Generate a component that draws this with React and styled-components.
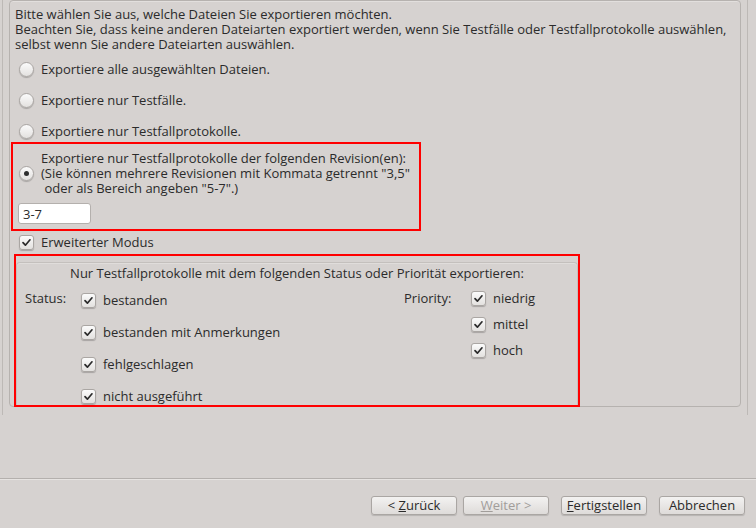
import React from 'react';
import styled, { createGlobalStyle } from 'styled-components';

const GlobalStyle = createGlobalStyle`
  html, body {
    margin: 0;
    padding: 0;
    background: #d6d2d0;
  }
  body {
    font-family: "Open Sans", "DejaVu Sans", sans-serif;
    font-size: 13px;
    color: #2b2b2b;
  }
`;

const Page = styled.div`
  width: 756px;
  height: 528px;
  display: flex;
  flex-direction: column;
  background: #d6d2d0;
`;

const ScrollFrame = styled.div`
  box-sizing: border-box;
  margin-left: 2px;
  width: 746px;
  height: 415px;
  padding: 0 6px;
  border-left: 1px solid #bdb9b6;
  border-right: 1px solid #bdb9b6;
`;

const Panel = styled.div`
  box-sizing: border-box;
  height: 407px;
  border: 1px solid #b6b2af;
  border-radius: 4px;
  box-shadow: inset 0 1px 0 #e2dfdd;
`;

const Intro = styled.div`
  margin: 6px 0 0 5px;
  line-height: 15px;
  white-space: nowrap;
`;

const Options = styled.div`
  display: flex;
  flex-direction: column;
  gap: 16px;
  margin-top: 10px;
`;

const OptionRow = styled.label`
  display: flex;
  align-items: center;
  padding-left: ${p => p.$indent ?? 9}px;
  line-height: 15px;
`;

const Radio = styled.span`
  box-sizing: border-box;
  flex: none;
  width: 15px;
  height: 15px;
  border-radius: 50%;
  border: 1px solid #aaa6a3;
  background: linear-gradient(#fbfbfb, #e3e1df);
  box-shadow: 0 1px 1px rgba(0, 0, 0, 0.22);
  display: flex;
  align-items: center;
  justify-content: center;

  &::after {
    content: '';
    display: ${p => (p.$checked ? 'block' : 'none')};
    width: 5px;
    height: 5px;
    border-radius: 50%;
    background: #2e2e2e;
  }
`;

const BoxWrap = styled.span`
  box-sizing: border-box;
  flex: none;
  width: 15px;
  height: 15px;
  border-radius: 3px;
  border: 1px solid #aaa6a3;
  background: linear-gradient(#fbfbfb, #e3e1df);
  box-shadow: 0 1px 1px rgba(0, 0, 0, 0.22);
  display: flex;
  align-items: center;
  justify-content: center;
`;

const Check = () => (
  <BoxWrap>
    <svg width="11" height="11" viewBox="0 0 11 11">
      <path d="M2 5.6 L4.4 8.2 L9 2.8" fill="none" stroke="#2a2a2a" strokeWidth="1.7" strokeLinecap="round" strokeLinejoin="round" />
    </svg>
  </BoxWrap>
);

const LabelText = styled.span`
  margin-left: 7px;
  white-space: pre;
`;

const Highlight = styled.div`
  box-sizing: border-box;
  border: 2px solid #ff0000;
  width: ${p => p.$width}px;
  height: ${p => (p.$height ? `${p.$height}px` : 'auto')};
  margin: ${p => p.$margin};
  padding: ${p => p.$padding ?? 0};
  display: flex;
  flex-direction: column;
`;

const RevisionInput = styled.input`
  box-sizing: border-box;
  width: 73px;
  height: 21px;
  margin: 7px 0 0 5px;
  padding: 0 4px;
  border: 1px solid #b4b0ad;
  border-radius: 3px;
  background: #fff;
  font: inherit;
  color: #2b2b2b;
  outline: none;
`;

const GroupBox = styled.div`
  flex: 1;
  margin-top: 6px;
  border: 1px solid #c4c0bd;
  border-bottom: none;
  border-radius: 4px 4px 0 0;
  box-shadow: inset 0 1px 0 #e0dddb;
  padding-top: 3px;
`;

const GroupTitle = styled.div`
  text-align: center;
  line-height: 15px;
`;

const FilterRow = styled.div`
  display: flex;
  margin-top: 10px;
  padding-left: 8px;
`;

const Filter = styled.div`
  display: flex;
  width: ${p => (p.$width ? `${p.$width}px` : 'auto')};
`;

const FilterLabel = styled.div`
  width: ${p => p.$width}px;
  line-height: 15px;
  flex: none;
`;

const FilterList = styled.div`
  display: flex;
  flex-direction: column;
  justify-content: ${p => (p.$spread ? 'space-between' : 'flex-start')};
  gap: ${p => p.$gap ?? 0}px;
  height: ${p => (p.$height ? `${p.$height}px` : 'auto')};
  padding-top: ${p => p.$top}px;
`;

const CheckRow = styled.div`
  display: flex;
  align-items: center;
  line-height: 15px;
`;

const Footer = styled.div`
  margin-top: auto;
  height: 50px;
  box-sizing: border-box;
  border-top: 1px solid #b4b0ad;
  box-shadow: inset 0 1px 0 #e6e3e1;
  display: flex;
  justify-content: flex-end;
  align-items: flex-start;
  padding: 17px 11px 0 0;
  gap: 12px;
`;

const ButtonGroup = styled.div`
  display: flex;
  gap: ${p => p.$gap}px;
`;

const Button = styled.button`
  box-sizing: border-box;
  width: 86px;
  height: 19px;
  padding: 0;
  border: 1px solid #aaa6a3;
  border-radius: 3px;
  background: linear-gradient(#f3f2f1, #dedbd9);
  box-shadow: 0 1px 1px rgba(0, 0, 0, 0.15);
  font-family: inherit;
  font-size: 13px;
  line-height: 17px;
  white-space: nowrap;
  color: ${p => (p.disabled ? '#a19d9a' : '#2b2b2b')};
`;

const statuses = ['bestanden', 'bestanden mit Anmerkungen', 'fehlgeschlagen', 'nicht ausgeführt'];
const priorities = ['niedrig', 'mittel', 'hoch'];

export default function App() {
  return (
    <Page>
      <GlobalStyle />
      <ScrollFrame>
        <Panel>
          <Intro>
            Bitte wählen Sie aus, welche Dateien Sie exportieren möchten.<br />
            Beachten Sie, dass keine anderen Dateiarten exportiert werden, wenn Sie Testfälle oder Testfallprotokolle auswählen,<br />
            selbst wenn Sie andere Dateiarten auswählen.
          </Intro>

          <Options>
            <OptionRow><Radio /><LabelText>Exportiere alle ausgewählten Dateien.</LabelText></OptionRow>
            <OptionRow><Radio /><LabelText>Exportiere nur Testfälle.</LabelText></OptionRow>
            <OptionRow><Radio /><LabelText>Exportiere nur Testfallprotokolle.</LabelText></OptionRow>
          </Options>

          <Highlight $width={410} $margin="3px 0 0 1px" $padding="7px 0 5px 0">
            <OptionRow $indent={6}>
              <Radio $checked />
              <LabelText>
                {'Exportiere nur Testfallprotokolle der folgenden Revision(en):\n(Sie können mehrere Revisionen mit Kommata getrennt "3,5"\n oder als Bereich angeben "5-7".)'}
              </LabelText>
            </OptionRow>
            <RevisionInput defaultValue="3-7" />
          </Highlight>

          <OptionRow style={{ marginTop: 4 }}>
            <Check /><LabelText>Erweiterter Modus</LabelText>
          </OptionRow>

          <Highlight $width={566} $height={153} $margin="4px 0 0 4px">
            <GroupBox>
              <GroupTitle>Nur Testfallprotokolle mit dem folgenden Status oder Priorität exportieren:</GroupTitle>
              <FilterRow>
                <Filter $width={379}>
                  <FilterLabel $width={56}>Status:</FilterLabel>
                  <FilterList $spread $height={111} $top={2}>
                    {statuses.map(s => (
                      <CheckRow key={s}><Check /><LabelText>{s}</LabelText></CheckRow>
                    ))}
                  </FilterList>
                </Filter>
                <Filter>
                  <FilterLabel $width={67}>Priority:</FilterLabel>
                  <FilterList $gap={11} $top={0}>
                    {priorities.map(s => (
                      <CheckRow key={s}><Check /><LabelText>{s}</LabelText></CheckRow>
                    ))}
                  </FilterList>
                </Filter>
              </FilterRow>
            </GroupBox>
          </Highlight>
        </Panel>
      </ScrollFrame>

      <Footer>
        <ButtonGroup $gap={6}>
          <Button>&lt; <u>Z</u>urück</Button>
          <Button disabled><u>W</u>eiter &gt;</Button>
        </ButtonGroup>
        <ButtonGroup $gap={12}>
          <Button><u>F</u>ertigstellen</Button>
          <Button>Abbrechen</Button>
        </ButtonGroup>
      </Footer>
    </Page>
  );
}
